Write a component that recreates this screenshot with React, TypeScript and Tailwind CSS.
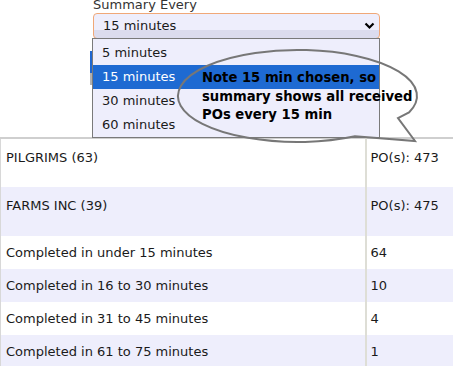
import React from "react";

const options = ["5 minutes", "15 minutes", "30 minutes", "60 minutes"];

const vendors = [
  { name: "PILGRIMS (63)", po: "PO(s): 473" },
  { name: "FARMS INC (39)", po: "PO(s): 475" },
];

const buckets = [
  { label: "Completed in under 15 minutes", count: "64" },
  { label: "Completed in 16 to 30 minutes", count: "10" },
  { label: "Completed in 31 to 45 minutes", count: "4" },
  { label: "Completed in 61 to 75 minutes", count: "1" },
];

function Chevron() {
  return (
    <svg width="11" height="8" viewBox="0 0 11 8" className="text-black">
      <path d="M1.5 1.5 L5.5 5.5 L9.5 1.5" fill="none" stroke="currentColor" strokeWidth="2.2" />
    </svg>
  );
}

function Callout() {
  return (
    <div className="absolute inset-0 pointer-events-none z-20">
      <svg width="453" height="366" viewBox="0 0 453 366" className="absolute left-0 top-0">
        <path
          d="M409 112.5 A119.5 46 0 1 0 355 136.3 L415 141 L398 118 Z"
          fill="none"
          stroke="#777777"
          strokeWidth="2"
          strokeLinejoin="miter"
        />
      </svg>
      <div className="absolute left-[202px] top-[69px] font-bold text-[13.2px] leading-[18.5px] text-black">
        <div>Note 15 min chosen, so</div>
        <div>summary shows all received</div>
        <div>POs every 15 min</div>
      </div>
    </div>
  );
}

export default function App() {
  return (
    <div className="relative w-[453px] h-[366px] overflow-hidden bg-white font-['DejaVu_Sans','Liberation_Sans',sans-serif] text-[13px] text-[#1a1a1a]">
      <div className="pl-[93px]">
        <div className="-mt-[3px] leading-[16px] text-[#333]">Summary Every</div>
        <div className="relative w-[287px]">
          <div className="h-[26px] rounded-[4px] border border-[#f0a878] bg-[linear-gradient(to_bottom,#eeeefc_0%,#eeeefc_68%,#dcdcee_68%,#dcdcee_100%)] flex items-center justify-between pl-[9px] pr-[4px]">
            <span>15 minutes</span>
            <Chevron />
          </div>

          {/* open list */}
          <div className="absolute left-[-1px] top-[25px] w-[288px] h-[100px] border border-[#7a7a7a] bg-[#eeeefc] pt-[2px] z-10">
            <div className="absolute left-[-3px] top-[12px] w-[2px] h-[22px] bg-[#1e66d0]" />
            <div className="absolute left-[-3px] top-[34px] w-[2px] h-[12px] bg-[#b0b0b0]" />
            {options.map((o) => (
              <div
                key={o}
                className={
                  o === "15 minutes"
                    ? "h-[24px] flex items-center pl-[9px] bg-[#1e6ad2] text-white"
                    : "h-[24px] flex items-center pl-[9px]"
                }
              >
                {o}
              </div>
            ))}
          </div>
        </div>
      </div>

      <table className="mt-[98px] w-[460px] border-collapse border-t-2 border-t-[#cfcfcf] border-l border-l-[#d8d8d8]">
        <tbody>
          {vendors.map((v, i) => (
            <tr key={v.name} className={i % 2 ? "bg-[#eeeefc] h-[49px]" : "bg-white h-[49px]"}>
              <td className="w-[365px] align-top pl-[5px] pt-[9px] border-r-2 border-r-[#deded6]">{v.name}</td>
              <td className="align-top pl-[4px] pt-[9px]">{v.po}</td>
            </tr>
          ))}
          {buckets.map((b, i) => (
            <tr key={b.label} className={i % 2 ? "bg-[#eeeefc] h-[33px]" : "bg-white h-[33px]"}>
              <td className="w-[365px] pl-[5px] border-r-2 border-r-[#deded6]">{b.label}</td>
              <td className="pl-[4px]">{b.count}</td>
            </tr>
          ))}
        </tbody>
      </table>

      <Callout />
    </div>
  );
}
